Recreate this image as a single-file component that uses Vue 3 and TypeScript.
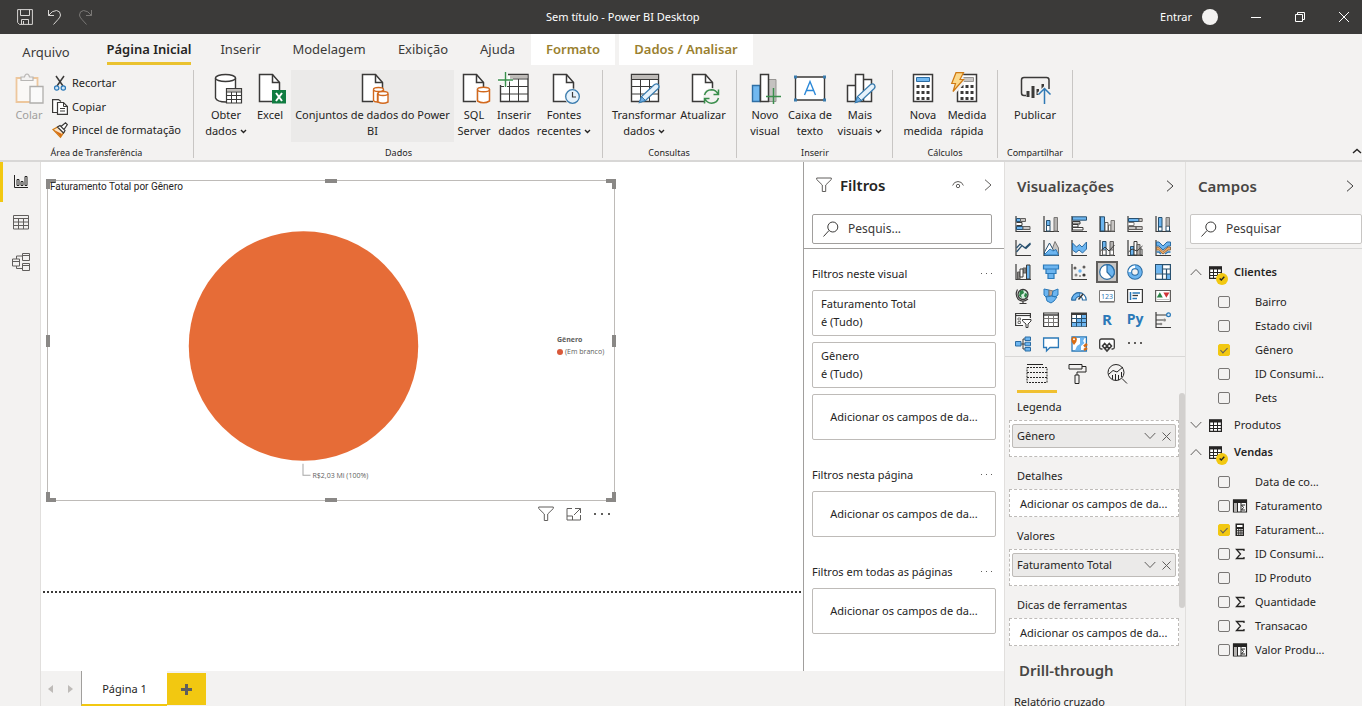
<script setup lang="ts">
import { ref } from 'vue'

interface RibbonItem { icon: string; lines: string[]; size: string; menu?: boolean; hover?: boolean }
interface RibbonGroup { label: string; cls: string; items: RibbonItem[] }
interface Field { name: string; icon?: string; checked?: boolean }
interface TableNode { name: string; open: boolean; badge: boolean; fields: Field[] }
interface Well { label: string; value?: string }
interface FilterSection { title: string; cards: { name: string; state: string }[] }

const D = '#3b3a39'
const page = `<path d="M5.5 2.5H18.5L25.5 10.5V29.5H5.5Z" fill="#fff" stroke="${D}" stroke-width="1.5"/><path d="M18.5 2.5V10.5H25.5" fill="none" stroke="${D}" stroke-width="1.5"/>`
const pencil = `<path d="M11.5 30.5L13.5 24.5L26.5 12.5Q29 11 30.5 13Q31.8 15 30 16.8L17.5 28.5Z" fill="#e6f2fb" stroke="#3a7cae" stroke-width="1.3"/><path d="M11.5 30.5L13.5 24.5L17.5 28.5Z" fill="#71afe5" stroke="#3a7cae"/>`
const gridBody = `<path d="M3.5 2.5H30.5V29.5H3.5Z" fill="#fff" stroke="${D}" stroke-width="1.4"/><path d="M4 3H30V7H4Z" fill="#bebbb8"/><path d="M3.5 7.5H30.5M3.5 14.5H30.5M3.5 22H30.5M12.5 7.5V29.5M21.5 7.5V29.5" stroke="${D}" fill="none"/>`
const keys = `<path d="M9.5 13h3v3h-3zM14.5 13h3v3h-3zM19.5 13h3v3h-3zM9.5 19h3v3h-3zM14.5 19h3v3h-3zM19.5 19h3v3h-3zM9.5 25h3v3h-3zM14.5 25h3v3h-3zM19.5 25h3v3h-3z" fill="${D}"/>`

const big: Record<string, string> = {
  get: `<path d="M5.5 6V26Q6 30 15 30H17V17H25V6Z" fill="#fff"/><path d="M5.5 6V26Q7 30 16 30M25.5 6V16" fill="none" stroke="${D}" stroke-width="1.4"/><ellipse cx="15.5" cy="6" rx="10" ry="3.5" fill="#fff" stroke="${D}" stroke-width="1.4"/><path d="M16.5 16.5H31.5V31H16.5Z" fill="#fff" stroke="${D}" stroke-width="1.2"/><path d="M17 17H31V19.5H17Z" fill="#bebbb8"/><path d="M16.5 20H31.5M16.5 23.5H31.5M16.5 27.5H31.5M21.5 20V31M26.5 20V31" stroke="${D}"/>`,
  excel: page + `<path d="M18 18H32V31.5H18Z" fill="#107c41"/><path d="M22 21L28 29M28 21L22 29" stroke="#fff" stroke-width="2"/>`,
  datasets: page + `<path d="M16 16H32V32H16Z" fill="#ebeae9"/><path d="M16.5 18V28.5Q17 30 20.5 30V22Q22 20 26.5 20V18" fill="#fff" stroke="#d2691e" stroke-width="1.4"/><ellipse cx="21.5" cy="17.5" rx="5" ry="2" fill="#fff" stroke="#d2691e" stroke-width="1.4"/><path d="M21 22V30Q26 32.5 31 30V22" fill="#fff" stroke="#d2691e" stroke-width="1.4"/><ellipse cx="26" cy="21.5" rx="5" ry="2" fill="#fff" stroke="#d2691e" stroke-width="1.4"/>`,
  sql: page + `<path d="M18 15H32V32H18Z" fill="#f3f2f1"/><path d="M19.5 17.5V29Q25.5 32.5 31.5 29V17.5" fill="#fff" stroke="#d2691e" stroke-width="1.5"/><ellipse cx="25.5" cy="17.5" rx="6" ry="2.3" fill="#fff" stroke="#d2691e" stroke-width="1.5"/>`,
  insert: `<path d="M2.5 2.5H30V29.5H2.5Z" fill="#fff" stroke="${D}" stroke-width="1.4"/><path d="M12 3H29.5V6.5H12Z" fill="#bebbb8"/><path d="M2.5 14.5H30M2.5 22H30M11.5 7V29.5M20.5 7V29.5M12 7H30" stroke="${D}"/><path d="M0 0H10V13H0Z" fill="#f3f2f1"/><path d="M7.5 0V15M0 8H15" stroke="#fff" stroke-width="3"/><path d="M7.5 0V15M0 8H15" stroke="#3a8e4c" stroke-width="1.5"/>`,
  recent: page + `<circle cx="24.5" cy="24.5" r="8" fill="#f3f2f1"/><circle cx="24.5" cy="24.5" r="6.8" fill="#e6f2fb" stroke="#3a7cae" stroke-width="1.3"/><path d="M24.5 20V25H28" fill="none" stroke="${D}" stroke-width="1.2"/>`,
  transform: gridBody + pencil,
  refresh: page + `<circle cx="24.5" cy="24.5" r="8.5" fill="#f3f2f1"/><path d="M17.5 23Q19 18 24.5 17.8Q29 18 31 22M31.5 17.5V22.5H26.5M31.5 26Q30 31 24.5 31.2Q20 31 18 27M17.5 31.5V26.5H22.5" fill="none" stroke="#3a8e4c" stroke-width="1.5"/>`,
  newVisual: `<path d="M3.5 13.5H11V29.5H3.5Z" fill="#71b8f0" stroke="#2f6fa5" stroke-width="1.4"/><path d="M19.5 7.5H27V29.5H19.5Z" fill="#c4c2c0" stroke="#979593"/><path d="M11.5 2.5H19.5V29.5H11.5Z" fill="#fff" stroke="${D}" stroke-width="1.5"/><path d="M24.5 16V32M17 24.5H32" stroke="#3a8e4c" stroke-width="1.5"/>`,
  textbox: `<path d="M1.5 5H30.5V28H1.5Z" fill="#fff" stroke="${D}" stroke-width="1.4"/><path d="M0 3.5h3v3h-3zM29 3.5h3v3h-3zM0 26.5h3v3h-3zM29 26.5h3v3h-3z" fill="#3a7cae"/><path d="M10.5 23L16 9.5L21.5 23M12.5 18.5H19.5" fill="none" stroke="#2b88d8" stroke-width="1.4"/>`,
  more: `<path d="M3.5 13.5H11.5V29.5H3.5ZM19.5 7.5H27.5V29.5H19.5ZM11.5 2.5H19.5V29.5H11.5Z" fill="#fff" stroke="${D}" stroke-width="1.5"/>` + pencil,
  measure: `<path d="M6.5 2.5H25.5V29.5H6.5Z" fill="#fff" stroke="${D}" stroke-width="1.5"/><path d="M9.5 5.5H22.5V9.5H9.5Z" fill="#71b8f0" stroke="#2b6ca3"/>` + keys,
  quick: `<path d="M6.5 2.5H25.5V29.5H6.5Z" fill="#fff" stroke="${D}" stroke-width="1.5"/><path d="M10.5 5.5H22.5V9.5H10.5Z" fill="#c8c6c4" stroke="#979593"/>` + keys + `<path d="M0 0H12L13 12L5 21H0Z" fill="#f3f2f1"/><path d="M5 .7H12.5L9 7.5H12.5L2 19.5L4.5 11.5H.7Z" fill="#fbd98d" stroke="#d07a13" stroke-width="1.2"/>`,
  publish: `<path d="M7 23.5H5Q2.5 23.5 2.5 21V8Q2.5 5.5 5 5.5H27.5Q30 5.5 30 8V17" fill="none" stroke="${D}" stroke-width="1.5"/><path d="M7.5 19h3v6h-3zM12.5 14h3v12h-3zM17.5 17h2.5v6h-2.5zM22.5 12h2.5v7h-2.5z" fill="${D}"/><path d="M25.5 32V17M19.5 22.5L25.5 16.5L31.5 22.5" fill="none" stroke="#f3f2f1" stroke-width="4"/><path d="M25.5 32V17M19.5 22.5L25.5 16.5L31.5 22.5" fill="none" stroke="#2f79b5" stroke-width="1.5"/>`,
  paste: `<path d="M3.5 6H24.5V30H3.5Z" fill="#faf8f6" stroke="#edc79d" stroke-width="1.8"/><path d="M8 8.5V5H11.5Q12 2 14 2T16.5 5H20V8.5Z" fill="#f3f2f1" stroke="#b8b6b4" stroke-width="1.2"/><path d="M17 14.5H30V31H17Z" fill="#fafafa" stroke="#b0aeac" stroke-width="1.3"/>`,
}

const small: Record<string, string> = {
  cut: `<path d="M4 1L11 11M12 1L5 11" stroke="${D}" stroke-width="1.5" fill="none"/><circle cx="4.7" cy="13" r="2.2" fill="#cfe5f7" stroke="#2b79b8" stroke-width="1.2"/><circle cx="11.3" cy="13" r="2.2" fill="#cfe5f7" stroke="#2b79b8" stroke-width="1.2"/>`,
  copy: `<path d="M5 13.5H.6V.6H6.5L9 2.5" fill="#fff" stroke="${D}" stroke-width="1.2"/><path d="M5.5 3.5H11.5L15.4 7.5V15.4H5.5Z" fill="#fff" stroke="${D}" stroke-width="1.2"/><path d="M11.5 3.5V7.5H15.4M8 9.5H13M8 12H13" fill="none" stroke="${D}"/>`,
  brush: `<path d="M1 7.5L6.5 4.5L12 10L8.5 15.2Z" fill="#fbe3c4" stroke="#d07a13" stroke-width="1.3"/><path d="M2 8L8.5 14.5L10 12Z" fill="#d86b12"/><path d="M5.5 5L8 3.5L13 8.5L11.5 11ZM9 4.5L13.5 .8L15.3 2.5L12 7.5" fill="#fff" stroke="${D}" stroke-width="1.2"/>`,
}

const B = '#6cb5f0'
const S = '#28506f'
const K = '#3b3a39'
const axis = `<path d="M1 0V15.5H16" fill="none" stroke="${K}" stroke-width="1.2"/>`
const viz: string[] = [
  axis + `<path d="M1.5 2.5H5.5V5.5H1.5ZM1.5 10.5H8V13.5H1.5Z" fill="${B}" stroke="${S}"/><path d="M5.5 2.5H10.5V5.5H5.5ZM8 10.5H15V13.5H8Z" fill="#c8c6c4" stroke="#605e5c"/><path d="M1.5 6.5H7V9.5H1.5" fill="#fff" stroke="${K}"/>`,
  axis + `<path d="M3.5 9.5H7V15H3.5Z" fill="#fff" stroke="${S}"/><path d="M3.5 4.5H7V9.5H3.5Z" fill="${B}" stroke="${S}"/><path d="M11 1.5H14.5V15H11Z" fill="#b5b3b1" stroke="#797775"/>`,
  axis + `<path d="M1.5 .8H15.5V4.2H1.5Z" fill="${B}" stroke="${S}"/><path d="M1.5 5.5H9V8H1.5Z" fill="#c8c6c4" stroke="${K}"/><path d="M1.5 8.5H7V11H1.5ZM1.5 11.5H12V14H1.5Z" fill="#fff" stroke="${K}"/>`,
  axis + `<path d="M1.5 .8H5.5V15H1.5Z" fill="${B}" stroke="${S}"/><path d="M6 6.5H9V15H6ZM9.5 9H12V15H9.5Z" fill="#fff" stroke="#605e5c"/><path d="M12 4.5H15.5V15H12Z" fill="#c8c6c4" stroke="#797775"/>`,
  axis + `<path d="M1.5 2.5H12V5.5H1.5Z" fill="${B}" stroke="${S}"/><path d="M12 2.5H15.2V5.5H12ZM9 10.5H15.2V13.5H9ZM1.5 10.5H9V13.5H1.5Z" fill="#c8c6c4" stroke="#605e5c"/><path d="M1.5 6.5H7V9.5H1.5" fill="#fff" stroke="#797775"/>`,
  axis + `<path d="M3.5 1.5H7V11H3.5Z" fill="${B}" stroke="${S}"/><path d="M3.5 11H7V15H3.5ZM11 10H14.5V15H11Z" fill="#fff" stroke="${S}"/><path d="M11 1.5H14.5V10H11Z" fill="#b5b3b1" stroke="#797775"/>`,
  axis + `<path d="M1.5 8L5 4L10 8L15.5 3M1.5 12L7 5.5L11 8.5L15.5 4" fill="none" stroke="${S}" stroke-width="1.2"/>`,
  axis + `<path d="M7 15L12 1.5L15.5 8V15Z" fill="#c8c6c4" stroke="#797775"/><path d="M1.5 12L6.5 3L13 15H1.5Z" fill="#fff" stroke="${S}"/><path d="M1.5 14.5L7 9L10 11L13 9.5L15.5 15H1.5Z" fill="${B}" stroke="#2b79b8"/>`,
  axis + `<path d="M1.5 3L5.5 7L8.5 4.5L11 7L15.5 2V9L11.5 13L8 10L5 12.5L1.5 10Z" fill="${B}" stroke="#2b6ca3"/>`,
  axis + `<path d="M3.5 1.5H7V15H3.5Z" fill="${B}" stroke="${S}"/><path d="M11 1.5H14.5V15H11Z" fill="#b5b3b1" stroke="#605e5c"/><path d="M3.5 10H7V15H3.5ZM11 10H14.5V15H11Z" fill="#fff" stroke="#605e5c"/><path d="M1.5 11L6 7L10 11L15.5 5" fill="none" stroke="${K}"/>`,
  axis + `<path d="M3.5 6.5H7V15H3.5Z" fill="${B}" stroke="${S}"/><path d="M7 1.5H10V15H7ZM13 9H15V15H13Z" fill="#fff" stroke="${K}"/><path d="M10 4.5H13V15H10Z" fill="#b5b3b1" stroke="#605e5c"/><path d="M1.5 12L5 9L10 11L15.5 6" fill="none" stroke="${K}"/>`,
  axis + `<path d="M1.5 2H4L8 6L12 2H15.5V6H13L8 10L4 6H1.5Z" fill="${B}" stroke="#2b6ca3"/><path d="M1.5 7H3.5L8 11.5L13 7H15.5V10H13L8 14L3.5 10H1.5Z" fill="#f0a860" stroke="#8a6a4a"/><path d="M1.5 12H4L6 14M15.5 12H13L10 14" stroke="#2b79b8" stroke-width="1.5" fill="none"/>`,
  axis + `<path d="M2.5 8H5V15H2.5ZM8 4H11V9H8Z" fill="#8a8886" stroke="#605e5c"/><path d="M5 5H8V13H5Z" fill="#fff" stroke="${K}"/><path d="M11.5 1H15V15H11.5Z" fill="${B}" stroke="${K}"/>`,
  `<path d="M.5 1H15.5V5H.5ZM3 5H13V9.5H3ZM5 9.5H11V14.5H5Z" fill="${B}" stroke="#2b79b8" stroke-width="1.2"/>`,
  axis + `<circle cx="4" cy="4" r="1.5" fill="#605e5c"/><circle cx="9" cy="7" r="1.7" fill="${B}"/><circle cx="13" cy="3" r="1.5" fill="#605e5c"/><circle cx="5" cy="11" r="1.5" fill="#8a8886"/><circle cx="13" cy="11" r="1.6" fill="${K}"/><circle cx="9" cy="12" r="1" fill="#8a8886"/>`,
  `<circle cx="8" cy="8" r="7.3" fill="#fff" stroke="#2b6ca3" stroke-width="1.2"/><path d="M8 8V.7A7.3 7.3 0 0 1 13 13.3Z" fill="${B}" stroke="#2b6ca3" stroke-width="1.2"/>`,
  `<circle cx="8" cy="8" r="5.3" fill="none" stroke="#2b6ca3" stroke-width="5"/><circle cx="8" cy="8" r="5.3" fill="none" stroke="${B}" stroke-width="3"/><path d="M1.5 8A6.5 6.5 0 0 1 8 1.5V4A4 4 0 0 0 4 8Z" fill="#fff"/>`,
  `<path d="M.6 .6H15.4V15.4H.6Z" fill="#fff" stroke="${S}" stroke-width="1.2"/><path d="M1 1H7V9.5H1ZM11.5 10H15V15H11.5Z" fill="${B}"/><path d="M7.5 .6V15.4M.6 10H7.5M7.5 5H15.4M11.5 5V15.4M7.5 10H15.4" stroke="${S}" stroke-width="1.2"/>`,
  `<circle cx="8" cy="6.5" r="5" fill="#d8efe0" stroke="${K}" stroke-width="1.3"/><path d="M5 3L8 2L9 5L6 7L7 10L4 8ZM10 5L12.5 6L11 10L9 8Z" fill="#2a8446"/><path d="M2.5 1.5Q-.5 7 3.5 11.5Q8 15 13 11M8 13V15.5M4.5 15.5H11.5" fill="none" stroke="${K}" stroke-width="1.2"/>`,
  `<path d="M1 1L6 2V7L3 9L1 7Z" fill="${B}" stroke="#2b79b8"/><path d="M6 2L10 3L9 8H6Z" fill="#c7a58e" stroke="#797775"/><path d="M10 3L15 1V7L12 9L9 8ZM3 9L9 8L14 9L11 13L8 15L4 13Z" fill="${B}" stroke="#2b79b8"/>`,
  `<path d="M.7 12A7.3 7.3 0 0 1 15.3 12H11.5A3.5 3.5 0 0 0 4.5 12Z" fill="#fff" stroke="#2b6ca3" stroke-width="1.2"/><path d="M.7 12A7.3 7.3 0 0 1 9 4.8L8.5 8.5A3.5 3.5 0 0 0 4.5 12Z" fill="${B}" stroke="#2b6ca3"/><path d="M7.5 11.5L12 6" stroke="${K}" stroke-width="1.5"/>`,
  `<path d="M.5 2.5H15.5V13.5H.5Z" fill="#fff" stroke="#797775"/><path d="M.5 14.5H15.5" stroke="#a19f9d"/><text x="8" y="11" text-anchor="middle" font-family="Noto Sans, sans-serif" font-size="7" fill="#2b79b8">123</text>`,
  `<path d="M.6 1.5H15.4V14.5H.6Z" fill="#fff" stroke="${K}" stroke-width="1.2"/><path d="M3.5 4V12" stroke="#2b79b8" stroke-width="1.5"/><path d="M5.5 5H13M5.5 10.5H10" stroke="#2b79b8" stroke-width="1.3"/><path d="M5.5 7.5H11" stroke="${K}" stroke-width="1.3"/>`,
  `<path d="M.6 2.5H15.4V13.5H.6Z" fill="#fff" stroke="#605e5c" stroke-width="1.2"/><path d="M1.8 9.5L4.8 4.3L7.8 9.5Z" fill="#2a8446"/><path d="M8.4 4.5H14.4L11.4 9.7Z" fill="#d13438"/><path d="M2 11.5H14" stroke="#c8c6c4"/>`,
  `<path d="M8 13.5H.6V1.5H15.4V6" fill="#fff" stroke="${K}" stroke-width="1.2"/><path d="M.6 3.5H15.4" stroke="${K}" stroke-width="1.2"/><path d="M3 6H5.5V8H3ZM3 9.5H5.5V11.5H3Z" fill="none" stroke="#797775"/><path d="M7.5 7.5H16V9L13 12V15.5H11V12L7.5 9Z" fill="#fff" stroke="${K}"/>`,
  `<path d="M.6 1H15.4V14.5H.6Z" fill="#fff" stroke="${K}" stroke-width="1.2"/><path d="M.6 3H15.4" stroke="${K}" stroke-width="1.5"/><path d="M.6 6.5H15.4M.6 10.5H15.4M5.5 3V14.5M10.5 3V14.5" stroke="#797775"/>`,
  `<path d="M.6 1H15.4V14.5H.6Z" fill="#fff" stroke="${K}" stroke-width="1.2"/><path d="M6 7H15V14.5H1V11H6Z" fill="${B}"/><path d="M11 3V6.5H15V3Z" fill="${B}"/><path d="M.6 2H15.4" stroke="${K}" stroke-width="2"/><path d="M.6 6.5H15.4M.6 10.5H15.4M5.5 3V14.5M10.5 3V14.5" stroke="${S}"/>`,
  `<text x="8" y="13" text-anchor="middle" font-family="Open Sans, sans-serif" font-weight="700" font-size="15" fill="#2b79b8">R</text>`,
  `<text x="8" y="12" text-anchor="middle" font-family="Open Sans, sans-serif" font-weight="700" font-size="14" fill="#2b79b8">Py</text>`,
  axis + `<path d="M1 3H12M1 8H8M1 12H5" stroke="${K}" stroke-width="1.2"/><circle cx="13.5" cy="2.8" r="1.9" fill="#d8ebfa" stroke="#2b79b8" stroke-width="1.2"/><circle cx="9.5" cy="8" r="1.5" fill="#8a8886"/><circle cx="6" cy="12" r="1.3" fill="#8a8886"/>`,
  `<path d="M6 8H8V3H10M8 8H10M8 8V13H10" fill="none" stroke="${K}"/><path d="M.5 5.5H6V10H.5ZM10 1H15.5V4.5H10ZM10 6.2H15.5V9.8H10ZM10 11.5H15.5V15H10Z" fill="${B}" stroke="#2b6ca3"/>`,
  `<path d="M.6 2H15.4V11.5H7L3.5 15V11.5H.6Z" fill="#fff" stroke="#2b79b8" stroke-width="1.3"/>`,
  `<path d="M1 1H15.4V15H1Z" fill="#fff" stroke="#2b79b8" stroke-width="1.3"/><path d="M9 1.5H14L12 5L13.5 7L10 10V14.500H4L6 10L9 8Z" fill="${B}"/><path d="M.2 3A3 3 0 0 1 6 3Q6 6 3 9Q0 6 .2 3Z" fill="#d86b12"/><circle cx="3" cy="3.2" r="1" fill="#fff"/><path d="M16 8L13 10.500M13 14L16 12" stroke="#d86b12" stroke-width="2.5"/>`,
  `<path d="M3.5 13H2.5Q.7 13 .7 11.5V4.5Q.7 3 2.5 3H13.5Q15.3 3 15.3 4.5V11.5Q15.3 13 13.5 13H12.5" fill="#fff" stroke="${K}" stroke-width="1.3"/><path d="M5.7 7.5L8 10L5.7 12.5L3.5 10ZM10.3 7.5L12.5 10L10.3 12.5L8 10ZM8 10.5L10 12.8L8 15L6 12.8Z" fill="#fff" stroke="${K}" stroke-width="1.6"/>`,
  `<path d="M1 6h2v2h-2zM7 6h2v2h-2zM13 6h2v2h-2z" fill="#605e5c"/>`,
]
const vizNames = ['Barras empilhadas', 'Colunas empilhadas', 'Barras clusterizado', 'Colunas clusterizado', 'Barras 100%', 'Colunas 100%', 'Linhas', 'Área', 'Área empilhada', 'Linhas e colunas empilhadas', 'Linhas e colunas clusterizadas', 'Faixa', 'Cascata', 'Funil', 'Dispersão', 'Pizza', 'Rosca', 'Treemap', 'Mapa', 'Mapa coroplético', 'Medidor', 'Cartão', 'Cartão de linha múltipla', 'KPI', 'Segmentação', 'Tabela', 'Matriz', 'R', 'Python', 'Influenciadores', 'Árvore hierárquica', 'P e R', 'ArcGIS', 'Power Apps', 'Mais opções']
const selectedViz = ref(15)

const groups: RibbonGroup[] = [
  { label: 'Dados', cls: 'data', items: [
    { icon: 'get', lines: ['Obter', 'dados'], size: 'w46', menu: true },
    { icon: 'excel', lines: ['Excel'], size: 'w42' },
    { icon: 'datasets', lines: ['Conjuntos de dados do Power', 'BI'], size: 'w163', hover: true },
    { icon: 'sql', lines: ['SQL', 'Server'], size: 'w40' },
    { icon: 'insert', lines: ['Inserir', 'dados'], size: 'w40' },
    { icon: 'recent', lines: ['Fontes', 'recentes'], size: 'w60', menu: true },
  ] },
  { label: 'Consultas', cls: 'queries', items: [
    { icon: 'transform', lines: ['Transformar', 'dados'], size: 'w68', menu: true },
    { icon: 'refresh', lines: ['Atualizar'], size: 'w50' },
  ] },
  { label: 'Inserir', cls: 'insert', items: [
    { icon: 'newVisual', lines: ['Novo', 'visual'], size: 'w40' },
    { icon: 'textbox', lines: ['Caixa de', 'texto'], size: 'w50' },
    { icon: 'more', lines: ['Mais', 'visuais'], size: 'w50', menu: true },
  ] },
  { label: 'Cálculos', cls: 'calc', items: [
    { icon: 'measure', lines: ['Nova', 'medida'], size: 'w44' },
    { icon: 'quick', lines: ['Medida', 'rápida'], size: 'w44' },
  ] },
  { label: 'Compartilhar', cls: 'share', items: [{ icon: 'publish', lines: ['Publicar'], size: 'w60' }] },
]
const clipboard = [
  { icon: 'cut', label: 'Recortar' },
  { icon: 'copy', label: 'Copiar' },
  { icon: 'brush', label: 'Pincel de formatação' },
]
const tabs = [
  { label: 'Arquivo', cls: 'file' },
  { label: 'Página Inicial', cls: 'active' },
  { label: 'Inserir', cls: '' },
  { label: 'Modelagem', cls: '' },
  { label: 'Exibição', cls: '' },
  { label: 'Ajuda', cls: '' },
  { label: 'Formato', cls: 'context' },
  { label: 'Dados / Analisar', cls: 'context last' },
]
const placeholder = 'Adicionar os campos de da...'
const filters: FilterSection[] = [
  { title: 'Filtros neste visual', cards: [{ name: 'Faturamento Total', state: 'é (Tudo)' }, { name: 'Gênero', state: 'é (Tudo)' }] },
  { title: 'Filtros nesta página', cards: [] },
  { title: 'Filtros em todas as páginas', cards: [] },
]
const wells: Well[] = [
  { label: 'Legenda', value: 'Gênero' },
  { label: 'Detalhes' },
  { label: 'Valores', value: 'Faturamento Total' },
  { label: 'Dicas de ferramentas' },
]
const tables = ref<TableNode[]>([
  { name: 'Clientes', open: true, badge: true, fields: [
    { name: 'Bairro' }, { name: 'Estado civil' }, { name: 'Gênero', checked: true }, { name: 'ID Consumi...' }, { name: 'Pets' },
  ] },
  { name: 'Produtos', open: false, badge: false, fields: [] },
  { name: 'Vendas', open: true, badge: true, fields: [
    { name: 'Data de co...' }, { name: 'Faturamento', icon: 'column' }, { name: 'Faturament...', icon: 'calc', checked: true },
    { name: 'ID Consumi...', icon: 'sum' }, { name: 'ID Produto' }, { name: 'Quantidade', icon: 'sum' },
    { name: 'Transacao', icon: 'sum' }, { name: 'Valor Produ...', icon: 'column' },
  ] },
])
const fieldIcons: Record<string, string> = {
  column: '<path d="M.5 1H13.5V13H.5Z" fill="#fff" stroke="#252423" stroke-width="1.2"/><path d="M0 .5H14V4H0Z" fill="#252423"/><path d="M1 4H4V12.5H1Z" fill="#b5b3b1"/><path d="M4.5 4V13M8 4V13" stroke="#252423"/><path d="M12 6H8.5L10.5 8.5L8.5 11H12" fill="none" stroke="#252423"/>',
  calc: '<path d="M2.500 .5H11V13H2.500Z" fill="#252423"/><path d="M4 2h5.500v2h-5.500zM4 6h1.300v1.300h-1.300zM6.200 6h1.300v1.300h-1.300zM8.400 6h1.300v1.300h-1.300zM4 8.300h1.300v1.300h-1.300zM6.200 8.300h1.300v1.300h-1.300zM8.400 8.300h1.300v1.300h-1.300zM4 10.500h1.300v1.300h-1.300zM6.200 10.500h1.300v1.300h-1.300zM8.400 10.500h1.300v1.300h-1.300z" fill="#fff"/>',
  sum: '<path d="M11 4V2.500H3.500L7.500 7L3.500 11.500H11V10" fill="none" stroke="#252423" stroke-width="1.300"/>',
}
</script>

<template>
  <div class="app">
    <header class="titlebar">
      <div class="quick">
        <button aria-label="Salvar"><svg width="16" height="16" viewBox="0 0 16 16"><path d="M.6.6H15.4V15.4H2.5L.6 13.5ZM3.5.6V6.500H12.500V.6M4.500 15.400V10.500H11.500V15.400M6.500 12V15" /></svg></button>
        <button aria-label="Desfazer"><svg width="16" height="16" viewBox="0 0 16 16"><path d="M1.500 1V6.500H7M1.500 6.500Q5 1.500 9.500 1.500Q13.500 2 13.500 6Q13.500 8 11 10.500L6.500 15.500" /></svg></button>
        <button class="dim" aria-label="Refazer"><svg width="16" height="16" viewBox="0 0 16 16"><path d="M14.500 1V6.500H9M14.500 6.500Q11 1.500 6.500 1.500Q2.500 2 2.500 6Q2.500 8 5 10.500L9.500 15.500" /></svg></button>
      </div>
      <h1>Sem título - Power BI Desktop</h1>
      <div class="window">
        <button class="signin">Entrar<i></i></button>
        <button aria-label="Minimizar"><svg width="12" height="12" viewBox="0 0 12 12"><path d="M1 6.500H11" /></svg></button>
        <button aria-label="Restaurar"><svg width="12" height="12" viewBox="0 0 12 12"><path d="M1.500 3.500H8.500V10.500H1.500ZM3.500 3.500V1.500H10.500V8.500H8.500" /></svg></button>
        <button aria-label="Fechar"><svg width="12" height="12" viewBox="0 0 12 12"><path d="M1 1L11 11M11 1L1 11" /></svg></button>
      </div>
    </header>

    <nav class="tabs">
      <button v-for="t in tabs" :key="t.label" :class="t.cls"><span>{{ t.label }}</span></button>
    </nav>

    <section class="ribbon">
      <div class="group clip">
        <div class="items">
          <button class="tool w42 disabled"><svg width="32" height="32" viewBox="0 0 32 32" v-html="big.paste"></svg><span>Colar</span></button>
          <div class="stack">
            <button v-for="c in clipboard" :key="c.icon"><svg width="16" height="16" viewBox="0 0 16 16" v-html="small[c.icon]"></svg>{{ c.label }}</button>
          </div>
        </div>
        <div class="caption">Área de Transferência</div>
      </div>
      <div v-for="g in groups" :key="g.label" class="group" :class="g.cls">
        <div class="items">
          <button v-for="i in g.items" :key="i.icon" class="tool" :class="[i.size, { hover: i.hover }]">
            <svg width="32" height="32" viewBox="0 0 32 32" v-html="big[i.icon]"></svg>
            <span v-for="(l, n) in i.lines" :key="l">{{ l }}<svg v-if="i.menu && n === i.lines.length - 1" class="caret" width="7" height="5" viewBox="0 0 7 5"><path d="M1 1L3.500 3.500L6 1" /></svg></span>
          </button>
        </div>
        <div class="caption">{{ g.label }}</div>
      </div>
      <button class="collapse" aria-label="Recolher faixa"><svg width="10" height="6" viewBox="0 0 10 6"><path d="M1 5L5 1.500L9 5" /></svg></button>
    </section>

    <main class="body">
      <nav class="rail">
        <button class="on" aria-label="Relatório"><svg width="16" height="16" viewBox="0 0 16 16"><path d="M1.500 1V13.500H15M4 5.500H6V11.500H4ZM8 7.500H10V11.500H8ZM12 2.500H14V11.500H12Z" /></svg></button>
        <button aria-label="Dados"><svg width="16" height="16" viewBox="0 0 16 16"><path d="M.5 1.500H15.500V15H.5ZM.5 4.500H15.500M.5 8H15.500M.5 11.500H15.500M5.500 4.500V15M10.500 4.500V15" /></svg></button>
        <button aria-label="Modelo"><svg width="18" height="18" viewBox="0 0 18 18"><path d="M.5 6H7.500V13H.5ZM.5 8.500H7.500M10.500 .5H17.500V7.500H10.500ZM10.500 2.500H17.500M10.500 10.500H17.500V17.500H10.500ZM10.500 12.500H17.500M4.500 6V3H10.500M4.500 13V15.500H10.500" /></svg></button>
      </nav>

      <div class="center">
        <div class="work">
          <div class="canvas">
            <div class="sheet">
              <article class="visual">
                <i class="h tl"></i><i class="h tr"></i><i class="h bl"></i><i class="h br"></i>
                <i class="h t"></i><i class="h b"></i><i class="h l"></i><i class="h r"></i>
                <h2>Faturamento Total por Gênero</h2>
                <div class="plot">
                  <svg class="pie" viewBox="0 0 508 306">
                    <circle cx="255" cy="152.500" r="114.500" fill="#e66c37" />
                    <path d="M254.500 270V281.500H262" fill="none" stroke="#a6a6a6" />
                    <text x="264" y="284">R$2,03 Mi (100%)</text>
                  </svg>
                  <div class="legend"><b>Gênero</b><span><i></i>(Em branco)</span></div>
                </div>
              </article>
              <div class="vtools">
                <button aria-label="Filtros"><svg width="16" height="16" viewBox="0 0 16 16"><path d="M.7 1H15.300V2.500L9.700 8V14.500H6.300V8L.7 2.500Z" /></svg></button>
                <button aria-label="Modo de foco"><svg width="16" height="16" viewBox="0 0 16 16"><path d="M6 2.500H1V14H14.500V9M1 10H6.500V14M9 2.500H14.500V7M14.500 2.500L8 9" /></svg></button>
                <button aria-label="Mais opções"><svg width="16" height="16" viewBox="0 0 16 16"><path class="fill" d="M0 7h2v2h-2zM7 7h2v2h-2zM14 7h2v2h-2z" /></svg></button>
              </div>
            </div>
          </div>

          <aside class="filters">
            <div class="fhead">
              <svg width="16" height="16" viewBox="0 0 16 16"><path d="M.7 1H15.300V2.500L9.700 8V14.500H6.300V8L.7 2.500Z" /></svg>
              <h3>Filtros</h3>
              <button aria-label="Ocultar"><svg width="12" height="10" viewBox="0 0 12 10"><path d="M.6 5.500Q2 1.500 6 1.500T11.400 5.500" /><circle cx="6" cy="6" r="1.700" /></svg></button>
              <button aria-label="Recolher filtros"><svg width="8" height="12" viewBox="0 0 8 12"><path d="M1 .7L7 6L1 11.300" /></svg></button>
            </div>
            <label class="search"><svg width="16" height="16" viewBox="0 0 16 16"><circle cx="9.800" cy="6" r="5" /><path d="M6 9.500L.5 15.500" /></svg><input aria-label="Pesquisar filtros" placeholder="Pesquis..." /></label>
            <div class="rule"></div>
            <section v-for="s in filters" :key="s.title">
              <div class="stitle">{{ s.title }}<button aria-label="Mais opções"><svg width="12" height="2" viewBox="0 0 12 2"><path class="fill" d="M0 0h1v1h-1zM5 0h1v1h-1zM10 0h1v1h-1z" /></svg></button></div>
              <div v-for="c in s.cards" :key="c.name" class="card"><span>{{ c.name }}</span><span>{{ c.state }}</span></div>
              <div class="card empty">{{ placeholder }}</div>
            </section>
          </aside>
        </div>

        <footer class="pages">
          <button class="arrow" aria-label="Anterior"><svg width="5" height="8" viewBox="0 0 5 8"><path d="M5 0V8L0 4Z" /></svg></button>
          <button class="arrow" aria-label="Próxima"><svg width="5" height="8" viewBox="0 0 5 8"><path d="M0 0V8L5 4Z" /></svg></button>
          <button class="page">Página 1</button>
          <button class="add" aria-label="Nova página"><svg width="11" height="11" viewBox="0 0 11 11"><path d="M5.500 0V11M0 5.500H11" /></svg></button>
        </footer>
      </div>

      <aside class="vis">
        <div class="phead"><h3>Visualizações</h3><button aria-label="Recolher"><svg width="8" height="12" viewBox="0 0 8 12"><path d="M1 .7L7 6L1 11.300" /></svg></button></div>
        <div class="gallery">
          <button v-for="(v, n) in viz" :key="n" :class="{ sel: n === selectedViz }" :aria-label="vizNames[n]" @click="selectedViz = n"><svg width="16" height="16" viewBox="0 0 16 16" v-html="v"></svg></button>
        </div>
        <div class="modes">
          <button class="on" aria-label="Campos"><svg width="22" height="22" viewBox="0 0 22 22"><path d="M1 1.500H17" /><path stroke-dasharray="2 1" d="M1 4.500H21V19.500H1ZM1 9.500H21M1 14.500H21" /></svg></button>
          <button aria-label="Formato"><svg width="22" height="22" viewBox="0 0 22 22"><path d="M3 1.500H16V6H3ZM16 3.500H20V9H11V12M9 12H13V20.500H9Z" /></svg></button>
          <button aria-label="Análise"><svg width="22" height="22" viewBox="0 0 22 22"><circle cx="10" cy="9.500" r="8" /><path d="M16 15.500L21 20.500M3 11L7 7.500L11 9L17 4M6.500 16V12M9.500 17V11M12.500 17V12M15.500 14V9" /></svg></button>
        </div>
        <div class="wells">
          <section v-for="w in wells" :key="w.label">
            <h4>{{ w.label }}</h4>
            <div v-if="w.value" class="well full">
              <div class="chip"><span>{{ w.value }}</span>
                <button aria-label="Opções"><svg width="12" height="8" viewBox="0 0 12 8"><path d="M.7 1L6 6.500L11.300 1" /></svg></button>
                <button aria-label="Remover"><svg width="9" height="9" viewBox="0 0 9 9"><path d="M.5.5L8.500 8.500M8.500.5L.5 8.500" /></svg></button>
              </div>
            </div>
            <div v-else class="well">{{ placeholder }}</div>
          </section>
          <h3>Drill-through</h3>
          <p>Relatório cruzado</p>
          <i class="thumb"></i>
        </div>
      </aside>

      <aside class="fields">
        <div class="phead"><h3>Campos</h3><button aria-label="Recolher"><svg width="8" height="12" viewBox="0 0 8 12"><path d="M1 .7L7 6L1 11.300" /></svg></button></div>
        <label class="search"><svg width="16" height="16" viewBox="0 0 16 16"><circle cx="9.800" cy="6" r="5" /><path d="M6 9.500L.5 15.500" /></svg><input aria-label="Pesquisar campos" placeholder="Pesquisar" /></label>
        <div class="rule"></div>
        <ul class="tree">
          <li v-for="t in tables" :key="t.name">
            <button class="tname" :class="{ strong: t.badge }" @click="t.open = !t.open">
              <svg class="chev" width="12" height="8" viewBox="0 0 12 8"><path :d="t.open ? 'M.7 7L6 1.500L11.300 7' : 'M.7 1L6 6.500L11.300 1'" /></svg>
              <span class="ticon">
                <svg width="13" height="13" viewBox="0 0 13 13"><path d="M.6 1H12.400V12.400H.6Z" fill="#fff" stroke="#252423" stroke-width="1.200" /><path d="M0 .4H13V3.500H0Z" fill="#252423" /><path d="M.6 6.500H12.400M.6 9.500H12.400M4.500 3V12.400M8.500 3V12.400" stroke="#252423" /></svg>
                <i v-if="t.badge"><svg width="6" height="5" viewBox="0 0 6 5"><path d="M.7 2.500L2.300 4L5.300 .8" fill="none" stroke="#252423" stroke-width="1.400" /></svg></i>
              </span>{{ t.name }}
            </button>
            <div v-if="t.open" class="flist">
              <label v-for="f in t.fields" :key="f.name">
                <input v-model="f.checked" type="checkbox" />
                <svg width="14" height="14" viewBox="0 0 14 14" v-html="f.icon ? fieldIcons[f.icon] : ''"></svg>
                <span>{{ f.name }}</span>
              </label>
            </div>
          </li>
        </ul>
      </aside>
    </main>
  </div>
</template>

<style>
html, body, #app { height: 100%; }
body { margin: 0; overflow: hidden; }
</style>

<style scoped>
* { box-sizing: border-box; }
.app { height: 100%; display: flex; flex-direction: column; background: #f3f2f1; color: #252423; font: 11px/16px "Noto Sans", "Open Sans", sans-serif; overflow: hidden; }
button { font: inherit; color: inherit; border: 0; background: none; padding: 0; margin: 0; white-space: nowrap; }
h1, h2, h3, h4, p, ul { margin: 0; padding: 0; font-weight: 400; font-size: 11px; list-style: none; }
svg { flex: none; display: block; overflow: visible; }

.titlebar { flex: none; height: 34px; background: #3b3a39; color: #fff; display: grid; grid-template-columns: 546px auto 1fr; align-items: center; }
.titlebar svg { fill: none; stroke: #fff; }
.quick { display: flex; gap: 14px; padding-left: 17px; }
.quick svg { stroke: #d8d6d4; }
.quick .dim svg { stroke: #797775; }
.window { display: flex; justify-content: flex-end; align-items: center; gap: 32px; padding-right: 12px; }
.signin { display: flex; align-items: center; gap: 10px; }
.signin i { width: 16px; height: 16px; border-radius: 50%; background: #f3f2f1; }

.tabs { flex: none; height: 34px; display: grid; grid-template-columns: 92px 113px 71px 106px 82px 67px 84px 138px; align-items: start; font-size: 13px; }
.tabs button { height: 31px; color: #3b3a39; text-align: center; }
.tabs span { display: block; line-height: 31px; }
.tabs .file span { line-height: 37px; }
.tabs .active { font-weight: 600; color: #252423; }
.tabs .active span { width: 84px; margin: 0 auto; line-height: 31px; box-shadow: inset 0 -3px #eac22f; }
.tabs .context { background: #fff; color: #9a7f2f; font-weight: 600; }
.tabs .last { margin-left: 4px; }

.ribbon { flex: none; height: 94px; padding-top: 2px; display: flex; border-bottom: 2px solid #d8d7d6; }
.group { height: 88px; border-right: 1px solid #c8c6c4; }
.items { display: flex; height: 72px; }
.clip { padding: 0 8px; width: 194px; }
.data { padding: 0 8px 0 9px; }
.queries { padding: 0 8px 0 7px; }
.insert { padding: 0 7px 0 8px; }
.calc { padding: 0 8px; }
.share { padding: 0 7px; }
.tool { flex: none; display: flex; flex-direction: column; align-items: center; justify-content: flex-start; padding-top: 2px; }
.tool > svg { margin-bottom: 3px; }
.tool span { display: flex; align-items: center; gap: 3px; }
.tool.hover { background: #ebeae9; }
.tool.disabled { color: #a19f9d; }
.caret, .collapse svg { fill: none; stroke: #252423; stroke-width: 1.4; }
.w40 { width: 40px; } .w42 { width: 42px; } .w44 { width: 44px; } .w46 { width: 46px; }
.w50 { width: 50px; } .w60 { width: 60px; } .w68 { width: 68px; } .w163 { width: 163px; }
.stack { display: flex; flex-direction: column; padding: 1px 0 0 2px; }
.stack button { display: flex; align-items: center; gap: 4px; height: 24px; }
.caption { font-size: 9px; line-height: 14px; margin-top: 4px; text-align: center; white-space: nowrap; }
.collapse { margin-left: auto; align-self: flex-end; padding: 0 0 6px; }

.body { flex: 1; min-height: 0; display: grid; grid-template-columns: 41px minmax(0, 1fr) 181px 177px; }
.rail { border-right: 1px solid #e1dfdd; display: flex; flex-direction: column; }
.rail button { height: 40px; display: grid; place-items: center; border-left: 3px solid transparent; padding-right: 2px; }
.rail .on { border-color: #f2c811; }
.rail svg { fill: none; stroke: #605e5c; }
.rail .on svg { stroke: #252423; }

.center { display: flex; flex-direction: column; min-height: 0; }
.work { flex: 1; min-height: 0; display: grid; grid-template-columns: minmax(0, 1fr) 201px; background: #fff; }
.canvas { padding: 0 2px; }
.sheet { height: 431px; padding: 18px 186px 0 4px; border-bottom: 2px dotted #3b3a39; }
.visual { position: relative; height: 321px; border: 1px solid #bebbb8; display: flex; flex-direction: column; }
.visual h2 { font: 10px/12px "Roboto", sans-serif; padding-left: 2px; position: relative; }
.plot { flex: 1; display: flex; min-height: 0; }
.pie { flex: 1; min-width: 0; height: 100%; }
.pie text { font: 7px "Open Sans", sans-serif; fill: #605e5c; }
.legend { width: 57px; padding-top: 141px; font: 7px/12px "Open Sans", sans-serif; color: #605e5c; white-space: nowrap; }
.legend b { display: block; }
.legend span { display: flex; align-items: center; gap: 2px; }
.legend i { width: 6px; height: 6px; border-radius: 50%; background: #d9593a; }
.h { position: absolute; border: 0 solid #8a8886; }
.tl, .tr, .bl, .br { width: 10px; height: 10px; }
.tl { left: -2px; top: -2px; border-width: 4px 0 0 4px; }
.tr { right: -2px; top: -2px; border-width: 4px 4px 0 0; }
.bl { left: -2px; bottom: -2px; border-width: 0 0 4px 4px; }
.br { right: -2px; bottom: -2px; border-width: 0 4px 4px 0; }
.h.t, .h.b { width: 12px; left: calc(50% - 6px); border-top-width: 4px; }
.h.t { top: -2px; } .h.b { bottom: -2px; }
.h.l, .h.r { height: 12px; top: calc(50% - 6px); border-left-width: 4px; }
.h.l { left: -2px; } .h.r { right: -2px; }
.vtools { display: flex; justify-content: flex-end; gap: 12px; padding: 5px 5px 0 0; }
.vtools svg, .filters svg, .fields .chev, .phead svg, .search svg, .chip svg, .modes svg { fill: none; stroke: #605e5c; }
svg .fill { fill: #605e5c; stroke: none; }

.filters { border-left: 1px solid #a19f9d; }
.fhead { height: 52px; display: flex; align-items: center; padding: 0 12px 7px; }
.fhead h3 { font-size: 15px; font-weight: 600; margin: 0 auto 0 8px; line-height: 20px; }
.fhead button + button { margin-left: 20px; }
.search { display: flex; align-items: center; gap: 9px; height: 30px; background: #fff; border: 1px solid #a19f9d; border-radius: 2px; padding: 0 10px; margin: 0 12px 4px 8px; }
.search svg { stroke: #3b3a39; }
.search input { flex: 1; min-width: 0; border: 0; outline: 0; background: none; padding: 0; font: inherit; font-size: 12px; color: inherit; }
.search input::placeholder { color: #3b3a39; opacity: 1; }
.rule { height: 1px; background: #a19f9d; }
.filters section { padding: 17px 8px 0; margin-bottom: 10px; }
.stitle { display: flex; justify-content: space-between; align-items: center; height: 16px; margin-bottom: 8px; padding-right: 3px; white-space: nowrap; }
.card { height: 46px; border: 1px solid #bebbb8; border-radius: 2px; margin-bottom: 6px; padding: 4px 8px; line-height: 18px; display: flex; flex-direction: column; background: #fff; white-space: nowrap; }
.card.empty { justify-content: center; align-items: center; margin-bottom: 10px; }

.pages { flex: none; height: 35px; background: #f3f2f1; display: flex; align-items: stretch; }
.arrow { width: 20px; display: grid; place-items: center; padding-right: 2px; }
.arrow svg { fill: #bebbb8; }
.page { width: 86px; background: #fff; border-bottom: 2px solid #f2c811; border-left: 1px solid #a19f9d; padding-top: 2px; }
.add { width: 39px; margin: 2px 0 1px; background: #f2c811; display: grid; place-items: center; }
.add svg { stroke: #605e5c; stroke-width: 3; }

.vis, .fields { border-left: 1px solid #e1dfdd; background: #f3f2f1; min-height: 0; min-width: 0; overflow: hidden; display: flex; flex-direction: column; }
.phead { flex: none; height: 50px; display: flex; align-items: center; justify-content: space-between; padding: 0 11px 2px 12px; }
.phead h3, .wells h3 { font-size: 15px; line-height: 20px; font-weight: 600; color: #484644; }
.phead svg { stroke: #3b3a39; }
.gallery { flex: none; display: grid; grid-template-columns: repeat(6, 28px); grid-auto-rows: 24px; padding-left: 4px; }
.gallery button { display: grid; place-items: center; }
.gallery .sel { background: #c8c6c4; box-shadow: inset 0 0 0 2px #605e5c; width: 22px; height: 22px; align-self: center; justify-self: center; }
.modes { flex: none; display: flex; border-top: 1px solid #d8d7d6; padding: 4px 0 0 12px; height: 37px; }
.modes button { width: 40px; height: 32px; display: grid; justify-items: center; align-items: start; padding-top: 2px; border-bottom: 3px solid transparent; }
.modes .on { border-color: #f0c030; }
.modes svg { stroke: #252423; }
.wells { flex: 1; position: relative; padding: 6px 6px 0 4px; overflow: hidden; white-space: nowrap; }
.wells h4 { padding-left: 8px; line-height: 16px; margin-bottom: 5px; }
.well { height: 28px; line-height: 27px; border: 1px dashed #bebbb8; background: #fff; padding-left: 10px; overflow: hidden; margin-bottom: 11px; }
.well.full { height: 37px; padding: 3px 2px; }
.chip { height: 24px; display: flex; align-items: center; gap: 6px; background: #ebeae9; border: 1px solid #bebbb8; border-radius: 2px; padding: 0 4px; line-height: 22px; }
.chip span { margin-right: auto; }
.wells h3 { padding: 3px 0 0 10px; margin-bottom: 14px; }
.wells p { padding-left: 5px; }
.thumb { position: absolute; right: 0; top: 0; width: 6px; height: 215px; border-radius: 3px; background: #d2d0ce; }

.fields .phead { padding-right: 8px; }
.fields .search { margin: 2px 0 4px 4px; border-color: #c8c6c4; }
.fields .rule { background: #d8d7d6; }
.tree { padding-top: 11px; }
.tree li { margin-bottom: 3px; }
.tname { display: flex; align-items: center; height: 24px; padding-left: 4px; gap: 7px; }
.tname.strong { font-weight: 600; }
.ticon { position: relative; width: 18px; }
.ticon i { position: absolute; left: 7px; top: 7px; width: 12px; height: 12px; border-radius: 50%; background: #f2c811; display: grid; place-items: center; }
.flist { padding-top: 6px; }
.flist label { display: flex; align-items: center; height: 24px; padding-left: 32px; white-space: nowrap; }
.flist input { appearance: none; width: 12px; height: 12px; margin: 0 3px 0 0; border: 1px solid #797775; border-radius: 2px; }
.flist input:checked { border-color: #f2c811; background: #f2c811; display: grid; place-items: center; }
.flist input:checked::after { content: ""; width: 3px; height: 6px; margin-top: -2px; border: solid #605e5c; border-width: 0 1px 1px 0; transform: rotate(45deg); }
.flist span { margin-left: 8px; }
</style>
